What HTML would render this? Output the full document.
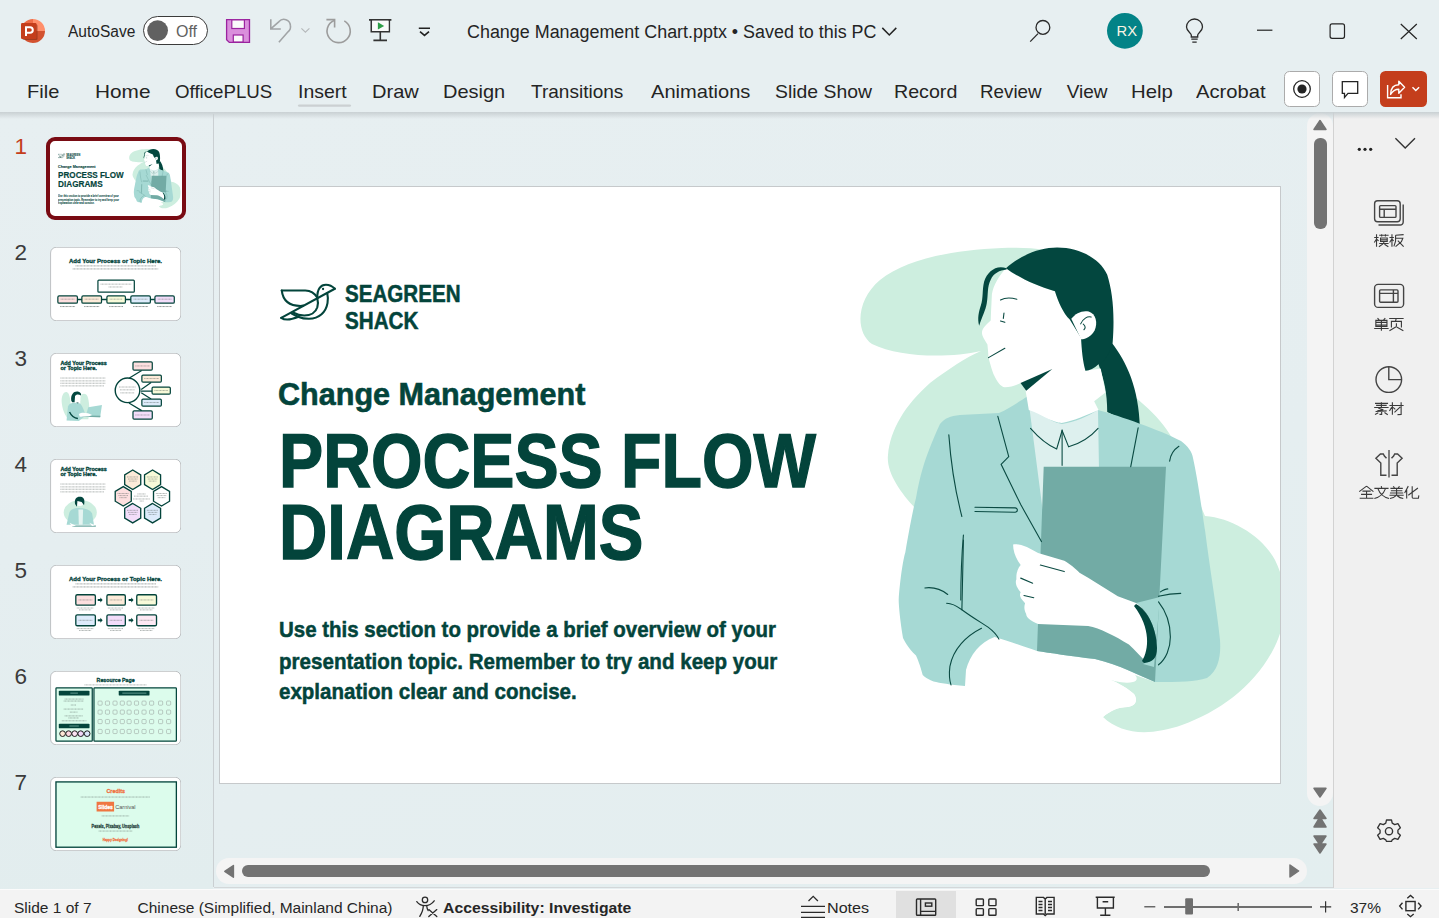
<!DOCTYPE html>
<html><head><meta charset="utf-8">
<style>
html,body{margin:0;padding:0;width:1439px;height:918px;overflow:hidden;background:#E7EFF1;font-family:"Liberation Sans",sans-serif;color:#242424;}
.a{position:absolute;}
.t{position:absolute;white-space:nowrap;line-height:1;}
.rib{font-size:19px;top:81.6px;color:#242424;transform-origin:0 0;}
.st{font-size:15.5px;top:899.5px;color:#262626;}
.sl{font-weight:700;color:#03443B;transform-origin:0 0;}
</style></head>
<body>
<!-- title bar -->
<div class="a" style="left:0;top:0;width:1439px;height:112px;background:#E7EFF1"></div>

<!-- left thumbnail panel -->
<div class="a" style="left:0;top:112px;width:213px;height:777px;background:linear-gradient(170deg,#E7EFF1 0%,#E5EEF0 55%,#E2EDEE 100%)"></div>
<div class="a" style="left:213px;top:114px;width:1px;height:773px;background:#CACFD2"></div>
<!--T1S--><div class="a" style="left:46px;top:137px;width:132px;height:75px;border:4px solid #790B13;border-radius:9px;background:#fff"></div><div class="a" style="left:50px;top:141px;width:132px;height:75px;overflow:hidden;border-radius:5px"><div class="a" style="left:0;top:0;width:1439px;height:918px;transform-origin:0 0;transform:matrix(0.1222,0,0,0.1222,-25.98,-22.2)">
<span class="t sl" style="left:345.3px;top:281.5px;font-size:23.8px;transform:scaleX(0.865);-webkit-text-stroke:0.5px #03443B">SEAGREEN</span>
<span class="t sl" style="left:345.3px;top:308.5px;font-size:23.8px;transform:scaleX(0.868);-webkit-text-stroke:0.5px #03443B">SHACK</span>
<span class="t sl" style="left:278.4px;top:377.6px;font-size:32px;transform:scaleX(0.955);-webkit-text-stroke:0.6px #03443B">Change Management</span>
<span class="t sl" style="left:279.3px;top:422px;font-size:76.8px;transform:scaleX(0.862);-webkit-text-stroke:1.4px #03443B">PROCESS FLOW</span>
<span class="t sl" style="left:279.3px;top:493.5px;font-size:77px;transform:scaleX(0.869);-webkit-text-stroke:1.4px #03443B">DIAGRAMS</span>
<span class="t sl" style="left:278.5px;top:619.3px;font-size:22px;transform:scaleX(0.93);-webkit-text-stroke:0.5px #03443B">Use this section to provide a brief overview of your</span>
<span class="t sl" style="left:278.5px;top:650.6px;font-size:22px;transform:scaleX(0.935);-webkit-text-stroke:0.5px #03443B">presentation topic. Remember to try and keep your</span>
<span class="t sl" style="left:279.4px;top:681.1px;font-size:22px;transform:scaleX(0.933);-webkit-text-stroke:0.5px #03443B">explanation clear and concise.</span>


<svg class="a" style="left:276px;top:278px" width="64" height="48" viewBox="0 0 1224 918">
 <g fill="none" stroke="#03443B" stroke-width="40" stroke-linecap="round" stroke-linejoin="round">
  <path d="M110 238 L560 238 C650 240 740 290 785 370"/>
  <path d="M110 238 C130 420 240 535 470 535 L520 528"/>
  <path d="M100 762 L1125 205"/>
  <path d="M790 380 C785 200 860 130 955 130 C1030 130 1080 160 1125 205"/>
  <path d="M790 390 C805 440 805 500 790 560 C760 660 660 718 540 718 C450 718 380 690 335 665"/>
  <path d="M980 290 C995 350 995 420 985 480 C955 650 830 780 630 780 C540 780 470 760 420 740"/>
  <path d="M100 762 C160 805 290 800 430 742"/>
  <path d="M300 680 L420 742"/>
 </g>
 <circle cx="900" cy="210" r="22" fill="#03443B"/>
</svg>



<svg class="a" style="left:220px;top:187px" width="1060" height="596" viewBox="220 187 1060 596">
 <!-- mint blob -->
 <path fill="#CDEEDF" d="M981 351 C950 358 900 358 872 344 C855 332 856 300 880 280 C905 260 950 250 1002 248 C1050 246 1095 255 1108 290 L1112 380 C1130 392 1160 415 1172 438 L1205 516 C1232 518 1262 536 1275 560 C1290 590 1287 625 1272 652 C1252 688 1218 712 1182 725 C1150 736 1122 735 1103 717 C1110 711 1118 707 1128 707 C1136 706 1138 700 1134 694 C1125 686 1114 681 1106 678 L1060 600 L915 508 C900 492 886 472 888 455 C890 430 905 405 930 383 C950 368 965 358 981 351 Z"/>
 <path fill="#FFFFFF" d="M950 690 L1000 630 L1100 640 L1160 672 L1155 682 L1135 675 C1138 678 1137 681 1133 682 C1125 684 1112 681 1106 678 C1114 681 1125 686 1134 694 C1138 700 1136 706 1128 707 C1118 707 1110 711 1103 717 L1000 760 L950 760 Z"/>
 <!-- ponytail lower -->
 <g transform="translate(970,240) scale(0.21782)">
  <path fill="#03473F" d="M650 470 C720 560 775 680 780 860 L630 790 C630 700 615 640 590 570 Z"/>
 </g>
 <!-- jacket -->
 <path fill="#A6D9D4" d="M940 424 C945 418 950 416 960 415 L999 413 C1010 408 1020 401 1028 396 L1098 410 C1120 416 1160 430 1181 441 C1188 446 1192 452 1193 458 C1198 480 1203 518 1205 530 C1210 570 1217 610 1220 640 C1221 655 1219 670 1207 678 C1195 682 1180 682 1155 682 C1140 676 1120 665 1095 659 C1070 656 1050 653 1037 651 C1020 645 1005 640 994.6 637 C980 642 970 655 966 670 L965 686 C950 685 940 683 933.6 681.6 C925 678 923 675 922.7 675 C920 665 918 660 916 655.5 C908 648 904 640 903 638 C900 620 898.7 605 898.7 600 C900 580 903 560 905.3 552.5 C910 525 914 505 916 498 C920 475 925 460 929 450 C933 440 937 430 940 424 Z"/>
 <!-- shirt -->
 <path fill="#DDF0EE" d="M1028 397 C1036 410 1048 422 1062 424 C1076 422 1088 416 1098 410 L1099 470 L1042.5 509 Z"/>
 <!-- face + neck -->
 <g transform="translate(970,240) scale(0.21782)">
  <path fill="#FFFFFF" d="M165 130 C120 180 100 230 100 260 C98 300 96 340 95 370 C75 390 55 405 55 425 C55 440 62 450 80 480 C82 500 84 520 85 540 C95 580 105 610 110 620 C125 650 140 675 160 676 C185 676 210 668 235 655 L255 690 L270 780 C300 790 330 805 360 822 C390 835 410 840 420 840 C450 835 500 820 590 780 L570 740 L622 700 L600 590 L530 600 L510 450 L458 365 C428 335 405 285 390 235 C300 210 220 170 165 130 Z"/>
  <path fill="#03473F" d="M165 130 C230 70 320 35 400 35 C510 35 600 90 630 160 C655 240 665 340 655 470 C650 500 620 560 590 570 C570 590 550 598 530 600 C518 560 512 500 510 450 L458 365 C428 335 405 285 390 235 C300 210 220 170 165 130 Z"/>
  <path fill="#FFFFFF" d="M465 362 C485 335 515 322 545 328 C578 338 588 380 572 415 C558 442 532 455 510 456 Z"/>
  <path fill="#03473F" d="M168 130 C120 112 80 145 65 190 C55 230 62 262 50 300 C40 330 33 360 42 394 C55 352 72 322 77 290 C84 250 78 215 95 182 C110 152 135 140 168 136 Z"/>
  <path fill="#03473F" d="M232 656 L378 592 L258 692 Z"/>
  <g fill="none" stroke="#0A4A42" stroke-width="5" stroke-linecap="round">
   <path d="M140 275 C160 265 190 265 215 272"/>
   <path d="M156 335 L153 360 M140 372 L160 378"/>
   <path d="M85 540 L160 497"/>
   <path d="M508 385 C518 362 540 348 556 354 M520 386 C532 396 530 406 523 412"/>
  </g>
 </g>
 <!-- folder -->
 <path fill="#72ABA5" d="M1043.7 466.7 L1166 466.7 L1155 682 C1140 676 1120 665 1095 659 C1070 656 1050 653 1037 651 Z"/>
 <!-- hand + forearm -->
 <path fill="#FFFFFF" d="M1013.1 544.4 C1020 543 1030 548 1038.1 553.1 L1064.3 560.7 C1070 564 1076 569 1079.5 572.7 L1088.1 577.8 L1117.8 596.3 L1138.1 603.7 C1150 615 1156 635 1154.8 644.4 C1153 655 1150 660 1147.4 663 C1140 656 1135 650 1128.9 644.4 C1115 636 1100 628 1088.1 625.9 L1038.1 623.9 C1030 621 1026 617 1026.2 614.1 C1024 610 1024 606 1025.1 603.2 C1020 598 1019 595 1020.7 592.3 C1016 587 1015 582 1016.4 579.2 C1016 573 1018 568 1020.7 565.1 C1016 559 1013 551 1013.1 544.4 Z"/>
 <path fill="#A6D9D4" d="M1136 603 L1160 597 L1154 667 L1143 664 C1152 660 1157 655 1157 648 C1157 630 1148 610 1136 603 Z"/>
 <path fill="#03473F" d="M1136 604 C1148 610 1157 630 1157 648 C1157 658 1153 662 1144 663 L1142 661 C1149 650 1151 628 1134 606 Z"/>
 <!-- lines -->
 <g fill="none" stroke="#0A4A42" stroke-width="1.1" stroke-linecap="round">
  <g transform="translate(890,400) scale(0.21786)" stroke-width="5">
   <path d="M645 130 C680 170 720 205 765 225 L790 140 L820 215 C870 200 920 170 955 130"/>
   <path d="M790 140 L790 300"/>
   <path d="M495 75 L545 260 L510 295 L600 480 L695 650"/>
   <path d="M390 492 L575 495 C588 497 588 514 575 515 L390 512"/>
   <path d="M270 160 C280 300 300 420 330 535"/>
   <path d="M337 620 C330 700 325 800 325 918"/>
  </g>
  <g transform="translate(890,540) scale(0.21786)" stroke-width="5">
   <path d="M160 220 C200 215 240 230 265 250"/>
   <path d="M260 290 C290 290 310 305 330 320 C370 350 420 380 450 400 C470 415 490 435 500 455"/>
   <path d="M420 405 C350 440 290 500 275 580 C270 620 275 650 280 665"/>
   <path d="M337 0 L330 320"/>
   <path d="M690 115 L800 145 M600 175 L655 198 M615 255 L660 265"/>
  </g>
  <g transform="translate(1040,400) scale(0.37037)" stroke-width="3">
   <path d="M265 75 L245 180"/>
   <path d="M375 125 C360 135 352 150 350 165"/>
   <path d="M320 530 C340 525 360 522 380 522 M325 518 C335 512 340 510 345 510"/>
   <path d="M320 545 C340 570 352 600 352 640 C352 670 340 700 320 715"/>
  </g>
 </g>
</svg>

</div></div><!--T1E-->
<!--THS--><svg class="a" style="left:50.1px;top:247.4px" width="131.4" height="74" viewBox="28 25 1384 783"><rect x="31" y="28" width="1378" height="777" rx="60" fill="#fff" stroke="#AEB1B3" stroke-width="8"/><text x="225" y="190" font-family="Liberation Sans" font-weight="700" font-size="58" fill="#03443B" stroke="#03443B" stroke-width="3" textLength="985" lengthAdjust="spacingAndGlyphs">Add Your Process or Topic Here.</text><path d="M295 225 H1145" stroke="#4E5956" stroke-width="6" stroke-dasharray="10 5"/><path d="M265 257 H1170" stroke="#4E5956" stroke-width="6" stroke-dasharray="10 5"/><rect x="532" y="375" width="385" height="127" rx="10" fill="#fff" stroke="#03443B" stroke-width="13"/><path d="M560 418 H885" stroke="#4E5956" stroke-width="5" stroke-dasharray="10 5"/><path d="M645 448 H790" stroke="#4E5956" stroke-width="5" stroke-dasharray="10 5"/><path d="M315 580 H1135" stroke="#03443B" stroke-width="15"/><rect x="108" y="543" width="207" height="77" rx="14" fill="#FDDFDF" stroke="#03443B" stroke-width="13"/><path d="M138 577 H285" stroke="#4E5956" stroke-width="5" stroke-dasharray="10 5"/><path d="M133 655 H290" stroke="#4E5956" stroke-width="7" stroke-dasharray="10 5"/><rect x="362" y="543" width="208" height="77" rx="14" fill="#FDEBD9" stroke="#03443B" stroke-width="13"/><path d="M392 577 H540" stroke="#4E5956" stroke-width="5" stroke-dasharray="10 5"/><path d="M387 655 H545" stroke="#4E5956" stroke-width="7" stroke-dasharray="10 5"/><rect x="627" y="543" width="196" height="77" rx="14" fill="#F8FAD9" stroke="#03443B" stroke-width="13"/><path d="M657 577 H793" stroke="#4E5956" stroke-width="5" stroke-dasharray="10 5"/><path d="M652 655 H798" stroke="#4E5956" stroke-width="7" stroke-dasharray="10 5"/><rect x="880" y="543" width="207" height="77" rx="14" fill="#DDEBFB" stroke="#03443B" stroke-width="13"/><path d="M910 577 H1057" stroke="#4E5956" stroke-width="5" stroke-dasharray="10 5"/><path d="M905 655 H1062" stroke="#4E5956" stroke-width="7" stroke-dasharray="10 5"/><rect x="1135" y="543" width="205" height="77" rx="14" fill="#F3DDFA" stroke="#03443B" stroke-width="13"/><path d="M1165 577 H1310" stroke="#4E5956" stroke-width="5" stroke-dasharray="10 5"/><path d="M1160 655 H1315" stroke="#4E5956" stroke-width="7" stroke-dasharray="10 5"/></svg>
<svg class="a" style="left:50.1px;top:353.4px" width="131.4" height="74" viewBox="28 25 1384 783"><rect x="31" y="28" width="1378" height="777" rx="60" fill="#fff" stroke="#AEB1B3" stroke-width="8"/><text x="135" y="156" font-family="Liberation Sans" font-weight="700" font-size="50" fill="#03443B" stroke="#03443B" stroke-width="3" textLength="490" lengthAdjust="spacingAndGlyphs">Add Your Process</text><text x="135" y="210" font-family="Liberation Sans" font-weight="700" font-size="50" fill="#03443B" stroke="#03443B" stroke-width="3" textLength="385" lengthAdjust="spacingAndGlyphs">or Topic Here.</text><path d="M135 290 H610" stroke="#4E5956" stroke-width="5" stroke-dasharray="10 5"/><path d="M135 320 H610" stroke="#4E5956" stroke-width="5" stroke-dasharray="10 5"/><path d="M135 345 H610" stroke="#4E5956" stroke-width="5" stroke-dasharray="10 5"/><path d="M135 373 H595" stroke="#4E5956" stroke-width="5" stroke-dasharray="10 5"/><path d="M150 560 C140 480 170 430 205 440 C240 450 250 560 245 740 C200 720 160 650 150 560 Z" fill="#CDEEDF"/><path d="M345 500 C350 450 400 440 420 480 C440 530 450 640 430 726 L345 726 Z" fill="#CDEEDF"/><path d="M200 740 L215 590 C225 560 260 550 290 552 L345 560 C370 590 390 640 400 690 L330 745 Z" fill="#A6D9D4"/><path d="M272 470 C290 450 330 450 345 470 L345 530 C330 545 300 548 280 540 Z" fill="#fff"/><path d="M250 530 C240 460 280 425 320 432 C350 437 360 460 352 475 C330 458 300 460 290 480 L285 545 L260 545 Z" fill="#03473F"/><path d="M300 545 L330 552 L320 560 Z" fill="#03473F"/><path d="M232 650 C250 690 280 715 320 718" fill="none" stroke="#03473F" stroke-width="14"/><path d="M400 700 L430 600 L575 575 L555 705 Z" fill="#A6D9D4"/><path d="M360 700 L555 705 L560 690 L380 685 Z" fill="#72ABA5"/><path d="M330 670 C360 650 420 655 470 680 L440 695 L340 700 Z" fill="#fff"/><circle cx="845" cy="420" r="130" fill="#fff" stroke="#03443B" stroke-width="15"/><path d="M865 290 L995 210 M990 410 L1095 338 M985 428 H1105 M990 445 L1095 512 M860 555 L995 635" stroke="#03443B" stroke-width="13"/><rect x="903" y="118" width="204" height="89" rx="12" fill="#FDDFDF" stroke="#03443B" stroke-width="13"/><path d="M928 162 H1082" stroke="#4E5956" stroke-width="5" stroke-dasharray="10 5"/><rect x="997" y="258" width="206" height="75" rx="12" fill="#FDEBD9" stroke="#03443B" stroke-width="13"/><path d="M1022 295 H1178" stroke="#4E5956" stroke-width="5" stroke-dasharray="10 5"/><rect x="1105" y="385" width="193" height="75" rx="12" fill="#F8FAD9" stroke="#03443B" stroke-width="13"/><path d="M1130 422 H1273" stroke="#4E5956" stroke-width="5" stroke-dasharray="10 5"/><rect x="997" y="512" width="206" height="75" rx="12" fill="#DDEBFB" stroke="#03443B" stroke-width="13"/><path d="M1022 549 H1178" stroke="#4E5956" stroke-width="5" stroke-dasharray="10 5"/><rect x="903" y="638" width="204" height="87" rx="12" fill="#F3DDFA" stroke="#03443B" stroke-width="13"/><path d="M928 681 H1082" stroke="#4E5956" stroke-width="5" stroke-dasharray="10 5"/><path d="M755 385 H935" stroke="#4E5956" stroke-width="5" stroke-dasharray="10 5"/><path d="M765 415 H920" stroke="#4E5956" stroke-width="5" stroke-dasharray="10 5"/><path d="M770 447 H915" stroke="#4E5956" stroke-width="5" stroke-dasharray="10 5"/></svg>
<svg class="a" style="left:50.1px;top:459.4px" width="131.4" height="74" viewBox="28 25 1384 783"><rect x="31" y="28" width="1378" height="777" rx="60" fill="#fff" stroke="#AEB1B3" stroke-width="8"/><text x="135" y="156" font-family="Liberation Sans" font-weight="700" font-size="50" fill="#03443B" stroke="#03443B" stroke-width="3" textLength="490" lengthAdjust="spacingAndGlyphs">Add Your Process</text><text x="135" y="210" font-family="Liberation Sans" font-weight="700" font-size="50" fill="#03443B" stroke="#03443B" stroke-width="3" textLength="385" lengthAdjust="spacingAndGlyphs">or Topic Here.</text><path d="M135 290 H610" stroke="#4E5956" stroke-width="5" stroke-dasharray="10 5"/><path d="M135 320 H610" stroke="#4E5956" stroke-width="5" stroke-dasharray="10 5"/><path d="M135 345 H610" stroke="#4E5956" stroke-width="5" stroke-dasharray="10 5"/><path d="M135 373 H595" stroke="#4E5956" stroke-width="5" stroke-dasharray="10 5"/><ellipse cx="345" cy="590" rx="175" ry="130" fill="#CDEEDF"/><path d="M200 720 L230 590 C250 550 300 540 345 545 C400 545 450 560 470 600 L490 720 Z" fill="#A6D9D4"/><path d="M325 560 L375 560 L370 720 L330 720 Z" fill="#E5F4F1"/><circle cx="340" cy="480" r="42" fill="#fff"/><path d="M290 500 C280 440 310 420 350 425 C390 430 395 470 385 515 L360 480 L315 470 L310 530 Z" fill="#03473F"/><path d="M260 735 H510" stroke="#72ABA5" stroke-width="14"/><path d="M230 700 L300 730 L260 740 Z M440 700 L500 725 L470 735 Z" fill="#fff"/><polygon points="900.0,142.0 815.1,193.5 815.1,296.5 900.0,348.0 984.9,296.5 984.9,193.5" fill="#FDEBD9" stroke="#03443B" stroke-width="14"/><path d="M840 215 H960" stroke="#4E5956" stroke-width="5" stroke-dasharray="10 5"/><path d="M850 237 H950" stroke="#4E5956" stroke-width="5" stroke-dasharray="10 5"/><path d="M860 259 H940" stroke="#4E5956" stroke-width="5" stroke-dasharray="10 5"/><polygon points="1110.0,142.0 1025.1,193.5 1025.1,296.5 1110.0,348.0 1194.9,296.5 1194.9,193.5" fill="#F8FAD9" stroke="#03443B" stroke-width="14"/><path d="M1050 215 H1170" stroke="#4E5956" stroke-width="5" stroke-dasharray="10 5"/><path d="M1060 237 H1160" stroke="#4E5956" stroke-width="5" stroke-dasharray="10 5"/><path d="M1070 259 H1150" stroke="#4E5956" stroke-width="5" stroke-dasharray="10 5"/><polygon points="800.0,317.0 715.1,368.5 715.1,471.5 800.0,523.0 884.9,471.5 884.9,368.5" fill="#FDDFDF" stroke="#03443B" stroke-width="14"/><path d="M740 390 H860" stroke="#4E5956" stroke-width="5" stroke-dasharray="10 5"/><path d="M750 412 H850" stroke="#4E5956" stroke-width="5" stroke-dasharray="10 5"/><path d="M760 434 H840" stroke="#4E5956" stroke-width="5" stroke-dasharray="10 5"/><polygon points="1205.0,317.0 1120.1,368.5 1120.1,471.5 1205.0,523.0 1289.9,471.5 1289.9,368.5" fill="#fff" stroke="#03443B" stroke-width="14"/><path d="M1145 390 H1265" stroke="#4E5956" stroke-width="5" stroke-dasharray="10 5"/><path d="M1155 412 H1255" stroke="#4E5956" stroke-width="5" stroke-dasharray="10 5"/><path d="M1165 434 H1245" stroke="#4E5956" stroke-width="5" stroke-dasharray="10 5"/><polygon points="900.0,495.0 815.1,546.5 815.1,649.5 900.0,701.0 984.9,649.5 984.9,546.5" fill="#F3DDFA" stroke="#03443B" stroke-width="14"/><path d="M840 568 H960" stroke="#4E5956" stroke-width="5" stroke-dasharray="10 5"/><path d="M850 590 H950" stroke="#4E5956" stroke-width="5" stroke-dasharray="10 5"/><path d="M860 612 H940" stroke="#4E5956" stroke-width="5" stroke-dasharray="10 5"/><polygon points="1110.0,495.0 1025.1,546.5 1025.1,649.5 1110.0,701.0 1194.9,649.5 1194.9,546.5" fill="#DDEBFB" stroke="#03443B" stroke-width="14"/><path d="M1050 568 H1170" stroke="#4E5956" stroke-width="5" stroke-dasharray="10 5"/><path d="M1060 590 H1160" stroke="#4E5956" stroke-width="5" stroke-dasharray="10 5"/><path d="M1070 612 H1150" stroke="#4E5956" stroke-width="5" stroke-dasharray="10 5"/><path d="M950 395 H1040" stroke="#4E5956" stroke-width="5" stroke-dasharray="10 5"/><path d="M915 418 H1065" stroke="#4E5956" stroke-width="5" stroke-dasharray="10 5"/><path d="M905 448 H1080" stroke="#4E5956" stroke-width="5" stroke-dasharray="10 5"/><path d="M975 470 H1015" stroke="#4E5956" stroke-width="5" stroke-dasharray="10 5"/></svg>
<svg class="a" style="left:50.1px;top:565.4px" width="131.4" height="74" viewBox="28 25 1384 783"><rect x="31" y="28" width="1378" height="777" rx="60" fill="#fff" stroke="#AEB1B3" stroke-width="8"/><text x="225" y="190" font-family="Liberation Sans" font-weight="700" font-size="58" fill="#03443B" stroke="#03443B" stroke-width="3" textLength="985" lengthAdjust="spacingAndGlyphs">Add Your Process or Topic Here.</text><path d="M295 225 H1145" stroke="#4E5956" stroke-width="6" stroke-dasharray="10 5"/><path d="M265 257 H1170" stroke="#4E5956" stroke-width="6" stroke-dasharray="10 5"/><rect x="298" y="340" width="207" height="110" rx="16" fill="#FDDFDF" stroke="#03443B" stroke-width="14"/><path d="M328 395 H475" stroke="#4E5956" stroke-width="5" stroke-dasharray="10 5"/><path d="M308 480 H485" stroke="#4E5956" stroke-width="5" stroke-dasharray="10 5"/><path d="M333 500 H460" stroke="#4E5956" stroke-width="5" stroke-dasharray="10 5"/><rect x="627" y="340" width="195" height="110" rx="16" fill="#FDEBD9" stroke="#03443B" stroke-width="14"/><path d="M657 395 H792" stroke="#4E5956" stroke-width="5" stroke-dasharray="10 5"/><path d="M637 480 H802" stroke="#4E5956" stroke-width="5" stroke-dasharray="10 5"/><path d="M662 500 H777" stroke="#4E5956" stroke-width="5" stroke-dasharray="10 5"/><rect x="943" y="340" width="209" height="110" rx="16" fill="#F8FAD9" stroke="#03443B" stroke-width="14"/><path d="M973 395 H1122" stroke="#4E5956" stroke-width="5" stroke-dasharray="10 5"/><path d="M953 480 H1132" stroke="#4E5956" stroke-width="5" stroke-dasharray="10 5"/><path d="M978 500 H1107" stroke="#4E5956" stroke-width="5" stroke-dasharray="10 5"/><path d="M530 384 H558 V369 L582 395 L558 421 V406 H530 Z" fill="#03443B"/><path d="M857 384 H885 V369 L909 395 L885 421 V406 H857 Z" fill="#03443B"/><rect x="298" y="552" width="207" height="116" rx="16" fill="#DDEBFB" stroke="#03443B" stroke-width="14"/><path d="M328 610 H475" stroke="#4E5956" stroke-width="5" stroke-dasharray="10 5"/><path d="M308 698 H485" stroke="#4E5956" stroke-width="5" stroke-dasharray="10 5"/><path d="M333 718 H460" stroke="#4E5956" stroke-width="5" stroke-dasharray="10 5"/><rect x="627" y="552" width="195" height="116" rx="16" fill="#F3DDFA" stroke="#03443B" stroke-width="14"/><path d="M657 610 H792" stroke="#4E5956" stroke-width="5" stroke-dasharray="10 5"/><path d="M637 698 H802" stroke="#4E5956" stroke-width="5" stroke-dasharray="10 5"/><path d="M662 718 H777" stroke="#4E5956" stroke-width="5" stroke-dasharray="10 5"/><rect x="943" y="552" width="209" height="116" rx="16" fill="#FDE9F4" stroke="#03443B" stroke-width="14"/><path d="M973 610 H1122" stroke="#4E5956" stroke-width="5" stroke-dasharray="10 5"/><path d="M953 698 H1132" stroke="#4E5956" stroke-width="5" stroke-dasharray="10 5"/><path d="M978 718 H1107" stroke="#4E5956" stroke-width="5" stroke-dasharray="10 5"/><path d="M530 599 H558 V584 L582 610 L558 636 V621 H530 Z" fill="#03443B"/><path d="M857 599 H885 V584 L909 610 L885 636 V621 H857 Z" fill="#03443B"/></svg>
<svg class="a" style="left:50.1px;top:671.4px" width="131.4" height="74" viewBox="28 25 1384 783"><rect x="31" y="28" width="1378" height="777" rx="60" fill="#fff" stroke="#AEB1B3" stroke-width="8"/><text x="518" y="138" font-family="Liberation Sans" font-weight="700" font-size="56" fill="#03443B" stroke="#03443B" stroke-width="3" textLength="402" lengthAdjust="spacingAndGlyphs">Resource Page</text><path d="M390 172 H1045" stroke="#4E5956" stroke-width="5" stroke-dasharray="10 5"/><rect x="88" y="203" width="384" height="565" rx="8" fill="#DCFCEC" stroke="#03443B" stroke-width="13"/><rect x="490" y="203" width="872" height="565" rx="8" fill="#DCFCEC" stroke="#03443B" stroke-width="13"/><rect x="118" y="233" width="325" height="52" rx="10" fill="#03443B"/><rect x="118" y="582" width="325" height="50" rx="10" fill="#03443B"/><rect x="752" y="233" width="326" height="52" rx="10" fill="#03443B"/><path d="M240 259 H320" stroke="#cfe" stroke-width="5"/><path d="M230 607 H330" stroke="#cfe" stroke-width="5"/><path d="M790 259 H1045" stroke="#cfe" stroke-width="5"/><path d="M180 322 H380" stroke="#4E5956" stroke-width="5" stroke-dasharray="10 5"/><path d="M170 343 H382" stroke="#4E5956" stroke-width="5" stroke-dasharray="10 5"/><path d="M245 385 H305" stroke="#4E5956" stroke-width="5" stroke-dasharray="10 5"/><path d="M170 428 H380" stroke="#4E5956" stroke-width="5" stroke-dasharray="10 5"/><path d="M235 460 H315" stroke="#4E5956" stroke-width="5" stroke-dasharray="10 5"/><path d="M180 500 H375" stroke="#4E5956" stroke-width="5" stroke-dasharray="10 5"/><path d="M220 522 H330" stroke="#4E5956" stroke-width="5" stroke-dasharray="10 5"/><path d="M150 552 H410" stroke="#4E5956" stroke-width="5" stroke-dasharray="10 5"/><circle cx="158" cy="688" r="30" fill="#FDE7D6" stroke="#111" stroke-width="10"/><circle cx="222" cy="688" r="30" fill="#FBD7DF" stroke="#111" stroke-width="10"/><circle cx="286" cy="688" r="30" fill="#FBE3F2" stroke="#111" stroke-width="10"/><circle cx="350" cy="688" r="30" fill="#F1D9F7" stroke="#111" stroke-width="10"/><circle cx="418" cy="688" r="30" fill="#DCE8FA" stroke="#111" stroke-width="10"/><rect x="533" y="343" width="44" height="44" rx="10" fill="none" stroke="#9AA3A0" stroke-width="6"/><rect x="611" y="343" width="44" height="44" rx="10" fill="none" stroke="#9AA3A0" stroke-width="6"/><rect x="691" y="343" width="44" height="44" rx="10" fill="none" stroke="#9AA3A0" stroke-width="6"/><rect x="768" y="343" width="44" height="44" rx="10" fill="none" stroke="#9AA3A0" stroke-width="6"/><rect x="840" y="343" width="44" height="44" rx="10" fill="none" stroke="#9AA3A0" stroke-width="6"/><rect x="918" y="343" width="44" height="44" rx="10" fill="none" stroke="#9AA3A0" stroke-width="6"/><rect x="998" y="343" width="44" height="44" rx="10" fill="none" stroke="#9AA3A0" stroke-width="6"/><rect x="1078" y="343" width="44" height="44" rx="10" fill="none" stroke="#9AA3A0" stroke-width="6"/><rect x="1173" y="343" width="44" height="44" rx="10" fill="none" stroke="#9AA3A0" stroke-width="6"/><rect x="1258" y="343" width="44" height="44" rx="10" fill="none" stroke="#9AA3A0" stroke-width="6"/><rect x="533" y="438" width="44" height="44" rx="10" fill="none" stroke="#9AA3A0" stroke-width="6"/><rect x="611" y="438" width="44" height="44" rx="10" fill="none" stroke="#9AA3A0" stroke-width="6"/><rect x="691" y="438" width="44" height="44" rx="10" fill="none" stroke="#9AA3A0" stroke-width="6"/><rect x="768" y="438" width="44" height="44" rx="10" fill="none" stroke="#9AA3A0" stroke-width="6"/><rect x="840" y="438" width="44" height="44" rx="10" fill="none" stroke="#9AA3A0" stroke-width="6"/><rect x="918" y="438" width="44" height="44" rx="10" fill="none" stroke="#9AA3A0" stroke-width="6"/><rect x="998" y="438" width="44" height="44" rx="10" fill="none" stroke="#9AA3A0" stroke-width="6"/><rect x="1078" y="438" width="44" height="44" rx="10" fill="none" stroke="#9AA3A0" stroke-width="6"/><rect x="1173" y="438" width="44" height="44" rx="10" fill="none" stroke="#9AA3A0" stroke-width="6"/><rect x="1258" y="438" width="44" height="44" rx="10" fill="none" stroke="#9AA3A0" stroke-width="6"/><rect x="533" y="538" width="44" height="44" rx="10" fill="none" stroke="#9AA3A0" stroke-width="6"/><rect x="611" y="538" width="44" height="44" rx="10" fill="none" stroke="#9AA3A0" stroke-width="6"/><rect x="691" y="538" width="44" height="44" rx="10" fill="none" stroke="#9AA3A0" stroke-width="6"/><rect x="768" y="538" width="44" height="44" rx="10" fill="none" stroke="#9AA3A0" stroke-width="6"/><rect x="840" y="538" width="44" height="44" rx="10" fill="none" stroke="#9AA3A0" stroke-width="6"/><rect x="918" y="538" width="44" height="44" rx="10" fill="none" stroke="#9AA3A0" stroke-width="6"/><rect x="998" y="538" width="44" height="44" rx="10" fill="none" stroke="#9AA3A0" stroke-width="6"/><rect x="1078" y="538" width="44" height="44" rx="10" fill="none" stroke="#9AA3A0" stroke-width="6"/><rect x="1173" y="538" width="44" height="44" rx="10" fill="none" stroke="#9AA3A0" stroke-width="6"/><rect x="1258" y="538" width="44" height="44" rx="10" fill="none" stroke="#9AA3A0" stroke-width="6"/><rect x="533" y="643" width="44" height="44" rx="10" fill="none" stroke="#9AA3A0" stroke-width="6"/><rect x="611" y="643" width="44" height="44" rx="10" fill="none" stroke="#9AA3A0" stroke-width="6"/><rect x="691" y="643" width="44" height="44" rx="10" fill="none" stroke="#9AA3A0" stroke-width="6"/><rect x="768" y="643" width="44" height="44" rx="10" fill="none" stroke="#9AA3A0" stroke-width="6"/><rect x="840" y="643" width="44" height="44" rx="10" fill="none" stroke="#9AA3A0" stroke-width="6"/><rect x="918" y="643" width="44" height="44" rx="10" fill="none" stroke="#9AA3A0" stroke-width="6"/><rect x="998" y="643" width="44" height="44" rx="10" fill="none" stroke="#9AA3A0" stroke-width="6"/><rect x="1078" y="643" width="44" height="44" rx="10" fill="none" stroke="#9AA3A0" stroke-width="6"/><rect x="1173" y="643" width="44" height="44" rx="10" fill="none" stroke="#9AA3A0" stroke-width="6"/><rect x="1258" y="643" width="44" height="44" rx="10" fill="none" stroke="#9AA3A0" stroke-width="6"/></svg>
<svg class="a" style="left:50.1px;top:777.4px" width="131.4" height="74" viewBox="28 25 1384 783"><rect x="31" y="28" width="1378" height="777" rx="60" fill="#fff" stroke="#AEB1B3" stroke-width="8"/><rect x="88" y="77" width="1274" height="691" fill="#DCFCEC" stroke="#03443B" stroke-width="14"/><text x="622" y="190" font-family="Liberation Sans" font-weight="700" font-size="56" fill="#F0703F" stroke="#F0703F" stroke-width="3" textLength="196" lengthAdjust="spacingAndGlyphs">Credits</text><path d="M350 237 H1085" stroke="#4E5956" stroke-width="5" stroke-dasharray="10 5"/><rect x="518" y="287" width="185" height="103" fill="#EF7641"/><text x="535" y="362" font-family="Liberation Sans" font-weight="700" font-size="58" fill="#fff" stroke="#fff" stroke-width="3" textLength="155" lengthAdjust="spacingAndGlyphs">Slides</text><text x="715" y="362" font-family="Liberation Sans" font-size="62" fill="#555" textLength="215" lengthAdjust="spacingAndGlyphs">Carnival</text><path d="M572 437 H862" stroke="#4E5956" stroke-width="5" stroke-dasharray="10 5"/><text x="465" y="562" font-family="Liberation Sans" font-weight="700" font-size="48" fill="#2F4A45" stroke="#2F4A45" stroke-width="3" textLength="505" lengthAdjust="spacingAndGlyphs">Pexels, Pixabay, Unsplash</text><path d="M540 597 H900" stroke="#4E5956" stroke-width="5" stroke-dasharray="10 5"/><text x="583" y="700" font-family="Liberation Sans" font-weight="700" font-size="44" fill="#F0703F" stroke="#F0703F" stroke-width="3" textLength="267" lengthAdjust="spacingAndGlyphs">Happy Designing!</text></svg>
<span class="t" style="left:14.6px;top:136.1px;font-size:22.5px;color:#C43E1C">1</span>
<span class="t" style="left:14.6px;top:242.1px;font-size:22.5px;color:#3B3B3B">2</span>
<span class="t" style="left:14.6px;top:348.1px;font-size:22.5px;color:#3B3B3B">3</span>
<span class="t" style="left:14.6px;top:454.1px;font-size:22.5px;color:#3B3B3B">4</span>
<span class="t" style="left:14.6px;top:560.1px;font-size:22.5px;color:#3B3B3B">5</span>
<span class="t" style="left:14.6px;top:666.1px;font-size:22.5px;color:#3B3B3B">6</span>
<span class="t" style="left:14.6px;top:772.1px;font-size:22.5px;color:#3B3B3B">7</span>
<!--THE-->


<!-- main area -->
<div class="a" style="left:214px;top:113px;width:1119px;height:774px;background:linear-gradient(160deg,#E7EFF1 0%,#E5EEF0 60%,#E3EEEF 100%)"></div>
<div class="a" style="left:214px;top:887px;width:1120px;height:1px;background:#D3D7D9"></div>

<!-- slide -->
<div class="a" style="left:219px;top:186px;width:1060px;height:596px;background:#fff;border:1px solid #C6C9CB"></div>

<!-- vertical scrollbar -->
<div class="a" style="left:1307px;top:113px;width:26px;height:693px;background:#F4F4F4;border-radius:13px"></div>
<div class="a" style="left:1314px;top:138px;width:12.5px;height:91px;background:#737373;border-radius:6px"></div>

<!-- right pane -->
<div class="a" style="left:1333px;top:112px;width:1px;height:776px;background:#D2D2D2"></div>
<div class="a" style="left:1334px;top:112px;width:105px;height:776px;background:#F0F0F0"></div>

<!-- horizontal scrollbar -->
<div class="a" style="left:216px;top:858px;width:1091px;height:26px;background:#F4F4F4;border-radius:13px"></div>
<div class="a" style="left:242px;top:865px;width:968px;height:12px;background:#737373;border-radius:6px"></div>


<!-- ribbon shadow -->
<div class="a" style="left:0;top:112px;width:1439px;height:7px;background:linear-gradient(#C9D0D3,rgba(230,236,239,0))"></div>


<!-- ===== SLIDE TEXT ===== -->
<span class="t sl" style="left:345.3px;top:281.5px;font-size:23.8px;transform:scaleX(0.865);-webkit-text-stroke:0.5px #03443B">SEAGREEN</span>
<span class="t sl" style="left:345.3px;top:308.5px;font-size:23.8px;transform:scaleX(0.868);-webkit-text-stroke:0.5px #03443B">SHACK</span>
<span class="t sl" style="left:278.4px;top:377.6px;font-size:32px;transform:scaleX(0.955);-webkit-text-stroke:0.6px #03443B">Change Management</span>
<span class="t sl" style="left:279.3px;top:422px;font-size:76.8px;transform:scaleX(0.862);-webkit-text-stroke:1.4px #03443B">PROCESS FLOW</span>
<span class="t sl" style="left:279.3px;top:493.5px;font-size:77px;transform:scaleX(0.869);-webkit-text-stroke:1.4px #03443B">DIAGRAMS</span>
<span class="t sl" style="left:278.5px;top:619.3px;font-size:22px;transform:scaleX(0.93);-webkit-text-stroke:0.5px #03443B">Use this section to provide a brief overview of your</span>
<span class="t sl" style="left:278.5px;top:650.6px;font-size:22px;transform:scaleX(0.935);-webkit-text-stroke:0.5px #03443B">presentation topic. Remember to try and keep your</span>
<span class="t sl" style="left:279.4px;top:681.1px;font-size:22px;transform:scaleX(0.933);-webkit-text-stroke:0.5px #03443B">explanation clear and concise.</span>


<svg class="a" style="left:276px;top:278px" width="64" height="48" viewBox="0 0 1224 918">
 <g fill="none" stroke="#03443B" stroke-width="40" stroke-linecap="round" stroke-linejoin="round">
  <path d="M110 238 L560 238 C650 240 740 290 785 370"/>
  <path d="M110 238 C130 420 240 535 470 535 L520 528"/>
  <path d="M100 762 L1125 205"/>
  <path d="M790 380 C785 200 860 130 955 130 C1030 130 1080 160 1125 205"/>
  <path d="M790 390 C805 440 805 500 790 560 C760 660 660 718 540 718 C450 718 380 690 335 665"/>
  <path d="M980 290 C995 350 995 420 985 480 C955 650 830 780 630 780 C540 780 470 760 420 740"/>
  <path d="M100 762 C160 805 290 800 430 742"/>
  <path d="M300 680 L420 742"/>
 </g>
 <circle cx="900" cy="210" r="22" fill="#03443B"/>
</svg>


<!-- ===== ILLUSTRATION ===== -->
<svg class="a" style="left:220px;top:187px" width="1060" height="596" viewBox="220 187 1060 596">
 <!-- mint blob -->
 <path fill="#CDEEDF" d="M981 351 C950 358 900 358 872 344 C855 332 856 300 880 280 C905 260 950 250 1002 248 C1050 246 1095 255 1108 290 L1112 380 C1130 392 1160 415 1172 438 L1205 516 C1232 518 1262 536 1275 560 C1290 590 1287 625 1272 652 C1252 688 1218 712 1182 725 C1150 736 1122 735 1103 717 C1110 711 1118 707 1128 707 C1136 706 1138 700 1134 694 C1125 686 1114 681 1106 678 L1060 600 L915 508 C900 492 886 472 888 455 C890 430 905 405 930 383 C950 368 965 358 981 351 Z"/>
 <path fill="#FFFFFF" d="M950 690 L1000 630 L1100 640 L1160 672 L1155 682 L1135 675 C1138 678 1137 681 1133 682 C1125 684 1112 681 1106 678 C1114 681 1125 686 1134 694 C1138 700 1136 706 1128 707 C1118 707 1110 711 1103 717 L1000 760 L950 760 Z"/>
 <!-- ponytail lower -->
 <g transform="translate(970,240) scale(0.21782)">
  <path fill="#03473F" d="M650 470 C720 560 775 680 780 860 L630 790 C630 700 615 640 590 570 Z"/>
 </g>
 <!-- jacket -->
 <path fill="#A6D9D4" d="M940 424 C945 418 950 416 960 415 L999 413 C1010 408 1020 401 1028 396 L1098 410 C1120 416 1160 430 1181 441 C1188 446 1192 452 1193 458 C1198 480 1203 518 1205 530 C1210 570 1217 610 1220 640 C1221 655 1219 670 1207 678 C1195 682 1180 682 1155 682 C1140 676 1120 665 1095 659 C1070 656 1050 653 1037 651 C1020 645 1005 640 994.6 637 C980 642 970 655 966 670 L965 686 C950 685 940 683 933.6 681.6 C925 678 923 675 922.7 675 C920 665 918 660 916 655.5 C908 648 904 640 903 638 C900 620 898.7 605 898.7 600 C900 580 903 560 905.3 552.5 C910 525 914 505 916 498 C920 475 925 460 929 450 C933 440 937 430 940 424 Z"/>
 <!-- shirt -->
 <path fill="#DDF0EE" d="M1028 397 C1036 410 1048 422 1062 424 C1076 422 1088 416 1098 410 L1099 470 L1042.5 509 Z"/>
 <!-- face + neck -->
 <g transform="translate(970,240) scale(0.21782)">
  <path fill="#FFFFFF" d="M165 130 C120 180 100 230 100 260 C98 300 96 340 95 370 C75 390 55 405 55 425 C55 440 62 450 80 480 C82 500 84 520 85 540 C95 580 105 610 110 620 C125 650 140 675 160 676 C185 676 210 668 235 655 L255 690 L270 780 C300 790 330 805 360 822 C390 835 410 840 420 840 C450 835 500 820 590 780 L570 740 L622 700 L600 590 L530 600 L510 450 L458 365 C428 335 405 285 390 235 C300 210 220 170 165 130 Z"/>
  <path fill="#03473F" d="M165 130 C230 70 320 35 400 35 C510 35 600 90 630 160 C655 240 665 340 655 470 C650 500 620 560 590 570 C570 590 550 598 530 600 C518 560 512 500 510 450 L458 365 C428 335 405 285 390 235 C300 210 220 170 165 130 Z"/>
  <path fill="#FFFFFF" d="M465 362 C485 335 515 322 545 328 C578 338 588 380 572 415 C558 442 532 455 510 456 Z"/>
  <path fill="#03473F" d="M168 130 C120 112 80 145 65 190 C55 230 62 262 50 300 C40 330 33 360 42 394 C55 352 72 322 77 290 C84 250 78 215 95 182 C110 152 135 140 168 136 Z"/>
  <path fill="#03473F" d="M232 656 L378 592 L258 692 Z"/>
  <g fill="none" stroke="#0A4A42" stroke-width="5" stroke-linecap="round">
   <path d="M140 275 C160 265 190 265 215 272"/>
   <path d="M156 335 L153 360 M140 372 L160 378"/>
   <path d="M85 540 L160 497"/>
   <path d="M508 385 C518 362 540 348 556 354 M520 386 C532 396 530 406 523 412"/>
  </g>
 </g>
 <!-- folder -->
 <path fill="#72ABA5" d="M1043.7 466.7 L1166 466.7 L1155 682 C1140 676 1120 665 1095 659 C1070 656 1050 653 1037 651 Z"/>
 <!-- hand + forearm -->
 <path fill="#FFFFFF" d="M1013.1 544.4 C1020 543 1030 548 1038.1 553.1 L1064.3 560.7 C1070 564 1076 569 1079.5 572.7 L1088.1 577.8 L1117.8 596.3 L1138.1 603.7 C1150 615 1156 635 1154.8 644.4 C1153 655 1150 660 1147.4 663 C1140 656 1135 650 1128.9 644.4 C1115 636 1100 628 1088.1 625.9 L1038.1 623.9 C1030 621 1026 617 1026.2 614.1 C1024 610 1024 606 1025.1 603.2 C1020 598 1019 595 1020.7 592.3 C1016 587 1015 582 1016.4 579.2 C1016 573 1018 568 1020.7 565.1 C1016 559 1013 551 1013.1 544.4 Z"/>
 <path fill="#A6D9D4" d="M1136 603 L1160 597 L1154 667 L1143 664 C1152 660 1157 655 1157 648 C1157 630 1148 610 1136 603 Z"/>
 <path fill="#03473F" d="M1136 604 C1148 610 1157 630 1157 648 C1157 658 1153 662 1144 663 L1142 661 C1149 650 1151 628 1134 606 Z"/>
 <!-- lines -->
 <g fill="none" stroke="#0A4A42" stroke-width="1.1" stroke-linecap="round">
  <g transform="translate(890,400) scale(0.21786)" stroke-width="5">
   <path d="M645 130 C680 170 720 205 765 225 L790 140 L820 215 C870 200 920 170 955 130"/>
   <path d="M790 140 L790 300"/>
   <path d="M495 75 L545 260 L510 295 L600 480 L695 650"/>
   <path d="M390 492 L575 495 C588 497 588 514 575 515 L390 512"/>
   <path d="M270 160 C280 300 300 420 330 535"/>
   <path d="M337 620 C330 700 325 800 325 918"/>
  </g>
  <g transform="translate(890,540) scale(0.21786)" stroke-width="5">
   <path d="M160 220 C200 215 240 230 265 250"/>
   <path d="M260 290 C290 290 310 305 330 320 C370 350 420 380 450 400 C470 415 490 435 500 455"/>
   <path d="M420 405 C350 440 290 500 275 580 C270 620 275 650 280 665"/>
   <path d="M337 0 L330 320"/>
   <path d="M690 115 L800 145 M600 175 L655 198 M615 255 L660 265"/>
  </g>
  <g transform="translate(1040,400) scale(0.37037)" stroke-width="3">
   <path d="M265 75 L245 180"/>
   <path d="M375 125 C360 135 352 150 350 165"/>
   <path d="M320 530 C340 525 360 522 380 522 M325 518 C335 512 340 510 345 510"/>
   <path d="M320 545 C340 570 352 600 352 640 C352 670 340 700 320 715"/>
  </g>
 </g>
</svg>

<!-- ===== TITLE BAR ===== -->
<svg class="a" style="left:0;top:0" width="1439" height="112" viewBox="0 0 1439 112">
 <!-- ppt logo -->
 <path d="M33 30.9 L33 18.9 A12 12 0 0 1 45 30.9 Z" fill="#FF8F6B"/>
 <path d="M33 30.9 L45 30.9 A12 12 0 0 1 33 42.9 A12 12 0 0 1 22.6 37 Z" fill="#D35230"/>
 <path d="M33 30.9 L33 18.9 A12 12 0 0 0 21 30.9 L21 36 Z" fill="#ED6C47"/>
 <rect x="22.5" y="24.5" width="15" height="15.5" rx="1.2" fill="#7A2A14" opacity="0.55"/>
 <rect x="21" y="23" width="15.5" height="16" rx="1.2" fill="#C43E1C"/>
 <path d="M26 36 V27.2 H30 A2.8 2.8 0 0 1 30 32.8 H26" fill="none" stroke="#fff" stroke-width="2"/>
 <!-- toggle -->
 <rect x="143.5" y="16.5" width="64" height="28" rx="14" fill="#fff" stroke="#3B3B3B" stroke-width="1"/>
 <circle cx="157.6" cy="30.6" r="10.4" fill="#616161"/>
 <!-- save -->
 <path d="M226.6 19.6 H249.5 V42.4 H229.3 L226.6 39.7 Z" fill="#DA8FDC" stroke="#9B239F" stroke-width="1.3"/>
 <rect x="231.8" y="19.9" width="12.6" height="8.6" fill="#FAFAFA" stroke="#9B239F" stroke-width="1.2"/>
 <rect x="233.3" y="35" width="9.8" height="7" fill="#FAFAFA" stroke="#9B239F" stroke-width="1.2"/>
 <!-- undo -->
 <path d="M270.8 19.3 V29 H280.8 M271.6 28.2 L279 21.6 A6.5 6.5 0 0 1 290.4 25.4 A6.5 6.5 0 0 1 288 31.8 L278.9 42.2" fill="none" stroke="#A1A4A6" stroke-width="1.6"/>
 <path d="M301.4 28.4 L305.4 32.2 L309.4 28.4" fill="none" stroke="#B5B8BA" stroke-width="1.1"/>
 <!-- redo -->
 <path d="M326.4 19.6 H334.6 V27.6" fill="none" stroke="#9C9C9C" stroke-width="1.6"/>
 <path d="M344.3 20.9 A11.6 11.6 0 1 1 334 20.4" fill="none" stroke="#9C9C9C" stroke-width="1.6"/>
 <!-- present -->
 <path d="M369 19.9 H391.4 M371.3 19.9 V31.8 H389.3 V19.9 M380.3 31.8 V40.4 M373.4 40.4 H387" fill="none" stroke="#333" stroke-width="1.6"/>
 <rect x="372.1" y="20.7" width="16.4" height="10.3" fill="#FAFAFA"/>
 <path d="M377.9 22.3 L384.2 25.9 L377.9 29.5 Z" fill="#2E9E48"/>
 <!-- customize -->
 <path d="M418.8 28.2 H430 M420 31.6 L424.5 35.4 L429 31.6" fill="none" stroke="#222" stroke-width="1.6"/>
 <!-- title chevron -->
 <path d="M882.3 27.9 L889.3 35 L896.3 27.9" fill="none" stroke="#242424" stroke-width="1.5"/>
 <!-- search -->
 <circle cx="1042.9" cy="27.4" r="6.9" fill="none" stroke="#2A2A2A" stroke-width="1.3"/>
 <path d="M1038 33.6 L1030.2 41.6" stroke="#2A2A2A" stroke-width="1.3"/>
 <!-- avatar -->
 <circle cx="1124.9" cy="30.8" r="17.9" fill="#038387"/>
 <!-- bulb -->
 <path d="M1191.3 37 V35 C1191 33 1186.5 31 1186.5 27 A8 8 0 0 1 1202.5 27 C1202.5 31 1198 33 1197.7 35 V37 Z" fill="none" stroke="#2A2A2A" stroke-width="1.3"/>
 <path d="M1191.3 39.2 H1197.7 M1192.3 42.2 H1196.7" stroke="#2A2A2A" stroke-width="1.3"/>
 <!-- window controls -->
 <path d="M1257 30.2 H1272.4" stroke="#242424" stroke-width="1.2"/>
 <rect x="1330.1" y="23.9" width="14.4" height="14.4" rx="2" fill="none" stroke="#242424" stroke-width="1.2"/>
 <path d="M1400.8 24 L1416.8 39 M1416.8 24 L1400.8 39" stroke="#242424" stroke-width="1.2"/>
 <!-- ribbon tab underline -->
 <rect x="298" y="104.4" width="53" height="2.4" rx="1.2" fill="#CBD0D2"/>
 <!-- record btn -->
 <rect x="1284.5" y="71.5" width="35" height="35" rx="5" fill="#fff" stroke="#ABABAB" stroke-width="1"/>
 <circle cx="1302" cy="89" r="8.3" fill="none" stroke="#242424" stroke-width="1.3"/>
 <circle cx="1302" cy="89" r="4.6" fill="#242424"/>
 <!-- comment btn -->
 <rect x="1332.5" y="71.5" width="35" height="35" rx="5" fill="#fff" stroke="#ABABAB" stroke-width="1"/>
 <path d="M1342.3 81.6 H1357.7 V93.4 H1348 L1344.5 97.5 V93.4 H1342.3 Z" fill="none" stroke="#242424" stroke-width="1.3"/>
 <!-- share btn -->
 <rect x="1380" y="71" width="47" height="36" rx="5.5" fill="#C43E1C"/>
 <path d="M1387.6 85 V97.7 H1401 V94.2" fill="none" stroke="#fff" stroke-width="1.4"/>
 <path d="M1390.6 94.5 C1390.8 88 1394 84.8 1398.8 84.8 V81.2 L1404.6 87.3 L1398.8 93.2 V89.2 C1395 89.2 1392.5 91 1390.6 94.5 Z" fill="none" stroke="#fff" stroke-width="1.4" stroke-linejoin="round"/>
 <path d="M1412.5 87.3 L1415.8 90.5 L1419.1 87.3" fill="none" stroke="#fff" stroke-width="1.5"/>
</svg>
<span class="t" style="left:68px;top:24.2px;font-size:16px;color:#242424;transform:scaleX(0.97);transform-origin:0 0">AutoSave</span>
<span class="t" style="left:176px;top:24.2px;font-size:16px;color:#616161">Off</span>
<span class="t" style="left:466.7px;top:24.2px;font-size:17.6px;color:#242424;transform:scaleX(1.018);transform-origin:0 0">Change Management Chart.pptx • Saved to this PC</span>
<span class="t" style="left:1116.5px;top:24px;font-size:14.8px;color:#FAF4E4">RX</span>

<span class="t rib" style="left:27.39px;transform:scaleX(1.054)">File</span>
<span class="t rib" style="left:94.61px;transform:scaleX(1.094)">Home</span>
<span class="t rib" style="left:174.77px;transform:scaleX(0.984)">OfficePLUS</span>
<span class="t rib" style="left:298.47px;transform:scaleX(1.022)">Insert</span>
<span class="t rib" style="left:372.42px;transform:scaleX(1.055)">Draw</span>
<span class="t rib" style="left:442.72px;transform:scaleX(1.052)">Design</span>
<span class="t rib" style="left:530.90px;transform:scaleX(1.001)">Transitions</span>
<span class="t rib" style="left:650.87px;transform:scaleX(1.057)">Animations</span>
<span class="t rib" style="left:774.98px;transform:scaleX(1.020)">Slide Show</span>
<span class="t rib" style="left:893.93px;transform:scaleX(1.034)">Record</span>
<span class="t rib" style="left:980.22px;transform:scaleX(0.988)">Review</span>
<span class="t rib" style="left:1066.70px;transform:scaleX(1.000)">View</span>
<span class="t rib" style="left:1131.09px;transform:scaleX(1.070)">Help</span>
<span class="t rib" style="left:1196.17px;transform:scaleX(1.062)">Acrobat</span>

<!-- status bar -->
<div class="a" style="left:0;top:889px;width:1439px;height:1px;background:#FBFBFB"></div>
<div class="a" style="left:0;top:890px;width:1439px;height:28px;background:#F3F3F3"></div>
<div class="a" style="left:896px;top:891px;width:60px;height:27px;background:#E0E0E0"></div>
<svg class="a" style="left:0;top:0" width="1439" height="918" viewBox="0 0 1439 918">
 <!-- v scroll arrows -->
 <path d="M1320 120.5 L1326 129.5 H1314 Z" fill="#737373" stroke="#737373" stroke-width="1.5" stroke-linejoin="round"/>
 <path d="M1320 797 L1326 788.3 H1314 Z" fill="#737373" stroke="#737373" stroke-width="1.5" stroke-linejoin="round"/>
 <path d="M1320 810 L1326 818.5 H1314 Z M1320 817 L1326 827 H1314 Z" fill="#737373" stroke="#737373" stroke-width="1.5" stroke-linejoin="round"/>
 <path d="M1320 845 L1326 836 H1314 Z M1320 853 L1326 844 H1314 Z" fill="#737373" stroke="#737373" stroke-width="1.5" stroke-linejoin="round"/>
 <!-- h scroll arrows -->
 <path d="M224.8 871.3 L233.4 865.5 V877.2 Z" fill="#737373" stroke="#737373" stroke-width="1.5" stroke-linejoin="round"/>
 <path d="M1298.6 871 L1290 865 V877 Z" fill="#737373" stroke="#737373" stroke-width="1.5" stroke-linejoin="round"/>
 <!-- right pane -->
 <circle cx="1359.3" cy="149.3" r="1.6" fill="#222"/><circle cx="1365" cy="149.3" r="1.6" fill="#222"/><circle cx="1370.7" cy="149.3" r="1.6" fill="#222"/>
 <path d="M1395.4 138.3 L1405.2 148 L1415 138.3" fill="none" stroke="#333" stroke-width="1.4"/>
 <g fill="none" stroke="#444" stroke-width="1.4">
  <rect x="1374.6" y="200.7" width="25.6" height="21" rx="3"/>
  <path d="M1403.2 204.5 V222 A3 3 0 0 1 1400 225 H1378.5"/>
  <rect x="1379.6" y="205.6" width="16.4" height="11.8" rx="1"/>
  <path d="M1379.6 209.2 H1396 M1384.2 209.2 V217.4"/>
  <rect x="1374.6" y="284.4" width="29" height="23" rx="3.5"/>
  <rect x="1379.6" y="289.9" width="18.4" height="12.4" rx="1"/>
  <path d="M1379.6 293.4 H1398 M1393.4 289.9 V302.3"/>
  <circle cx="1388.8" cy="379.6" r="12.8"/>
  <path d="M1388.8 366.8 V379.6 H1401.6"/>
  <path d="M1389 450.1 V477.5" stroke="#5A5A5A" stroke-width="1.5"/>
  <path d="M1386.5 458.3 L1384.4 456 L1383.3 454 H1380.4 L1375.9 458.3 L1380.8 463 V475.2 H1386.5 M1391.5 458.3 L1393.6 456 L1394.7 454 H1397.6 L1402.1 458.3 L1397.2 463 V475.2 H1391.5"/>
 </g>
 <!-- gear -->
 <g transform="translate(1389,830.7)" fill="none" stroke="#333" stroke-width="1.4" stroke-linejoin="round">
  <path d="M-2.6 -11.3 L2.6 -11.3 L3.4 -7.9 L6 -6.4 L9.4 -7.5 L12 -3 L9.4 -0.6 L9.4 2.4 L12 4.7 L9.4 9.2 L6 8.1 L3.4 9.6 L2.6 11.3 L-2.6 11.3 L-3.4 9.6 L-6 8.1 L-9.4 9.2 L-12 4.7 L-9.4 2.4 L-9.4 -0.6 L-12 -3 L-9.4 -7.5 L-6 -6.4 L-3.4 -7.9 Z" transform="scale(0.95)"/>
  <circle cx="0" cy="0.5" r="3.6"/>
 </g>
 <!-- accessibility icon -->
 <g fill="none" stroke="#2A2A2A" stroke-width="1.3" stroke-linecap="round" stroke-linejoin="round">
  <circle cx="425" cy="899.9" r="2.7"/>
  <path d="M416.8 901.6 C418.5 904 421.5 905.6 425 905.6 C428.5 905.6 431.8 904 434.2 900.8"/>
  <path d="M423.3 905.8 C423.3 909 422.5 912 419.8 916.4 M426.7 905.8 C426.9 908 427.3 909.5 428.2 910.6"/>
  <path d="M428.8 909.6 L436.8 916.6 M436.8 909.6 L428.8 916.6"/>
 </g>
 <!-- notes icon -->
 <g fill="none" stroke="#2A2A2A" stroke-width="1.3">
  <path d="M808.5 901 L813.2 896.4 L817.9 901"/>
  <path d="M801 906.4 H825 M801 912.3 H825 M801 917.4 H825"/>
 </g>
 <!-- view icons -->
 <g fill="none" stroke="#2A2A2A" stroke-width="1.4">
  <rect x="916.5" y="899" width="19.2" height="16.2" rx="0.8"/>
  <path d="M920.6 899 V915.2 M920.6 911.4 H935.7"/>
  <rect x="925.4" y="903" width="6.4" height="3.2"/>
  <rect x="976.2" y="899" width="7.2" height="6.6" rx="0.8"/><rect x="988.8" y="899" width="7.2" height="6.6" rx="0.8"/>
  <rect x="976.2" y="908.6" width="7.2" height="6.6" rx="0.8"/><rect x="988.8" y="908.6" width="7.2" height="6.6" rx="0.8"/>
  <path d="M1036.3 897.4 H1043.5 L1045.2 899 L1046.9 897.4 H1054.1 V914 H1046.9 L1045.2 915.6 L1043.5 914 H1036.3 Z M1045.2 899 V914"/>
  <path d="M1038.5 901.5 H1042.5 M1038.5 904.5 H1042.5 M1038.5 907.5 H1042.5 M1038.5 910.5 H1042.5 M1048 901.5 H1052 M1048 904.5 H1052 M1048 907.5 H1052 M1048 910.5 H1052"/>
  <path d="M1095.7 897.3 H1114.7 M1097.4 897.3 V908 H1113.4 V897.3 M1105.4 908 V915.2 M1100.2 915.2 H1110.4 M1102.6 901.8 H1108.2"/>
 </g>
 <!-- zoom slider -->
 <path d="M1144.3 906.8 H1155.3" stroke="#444" stroke-width="1.2"/>
 <path d="M1164 907 H1312" stroke="#6E6E6E" stroke-width="2"/>
 <path d="M1238.2 903 V911" stroke="#6E6E6E" stroke-width="1.6"/>
 <rect x="1185.2" y="898.2" width="7.8" height="16.3" rx="1" fill="#6E6E6E"/>
 <path d="M1320 906.9 H1331.2 M1325.6 901.3 V912.5" stroke="#333" stroke-width="1.2"/>
 <!-- fit -->
 <g fill="none" stroke="#2A2A2A" stroke-width="1.4">
  <rect x="1405.9" y="901.5" width="9.2" height="9.2"/>
  <path d="M1402.5 902.8 L1399.7 906.1 L1402.5 909.4 M1418.2 902.8 L1421 906.1 L1418.2 909.4 M1407.3 898.2 L1410.5 895.5 L1413.7 898.2 M1407.3 914 L1410.5 916.7 L1413.7 914"/>
 </g>
</svg>

<!-- CJK glyph approximations -->
<svg class="a" style="left:0;top:0" width="1439" height="918" viewBox="0 0 1439 918">
 <g fill="none" stroke="#3A3A3A" stroke-linecap="butt">
  <g transform="translate(1370,230) scale(0.027797)" stroke-width="40">
   <path d="M235 150V600 M150 270H310 M230 330L155 450 M250 340L310 390"/>
   <path d="M330 190H670 M420 150V230 M555 150V230 M380 290H620V410H380Z M380 350H620 M330 485H670 M495 410V485 M470 500L320 600 M520 510L660 600"/>
   <path d="M790 150V600 M700 270H860 M780 330L705 450 M800 340L850 390"/>
   <path d="M920 190L1210 165 M920 190V400L860 590 M940 295H1180L1130 420L920 600 M1000 380L1210 600"/>
  </g>
  <g transform="translate(1370,314) scale(0.027797)" stroke-width="40">
   <path d="M270 150L330 210 M550 150L490 210 M210 230H610V450H210Z M210 300H610 M210 400H610 M410 230V600 M150 520H670"/>
   <path d="M690 160H1210 M940 180L920 250 M770 490V265H1130V490 M950 330V460 M940 460L700 600 M960 470L1200 600"/>
  </g>
  <g transform="translate(1370,398) scale(0.027797)" stroke-width="40">
   <path d="M180 195H650 M220 265H600 M150 340H670 M410 150V340 M300 370L480 420L260 470 M200 485L600 465 M180 590L300 530 M420 500V590H340 M520 520L640 600"/>
   <path d="M805 150V600 M700 270H1210 M780 330L700 470 M830 340L910 410 M1120 150V590L990 600 M1090 320L880 520"/>
  </g>
  <g transform="translate(1356,482) scale(0.045872)" stroke-width="24">
   <path d="M230 90L70 210 M230 90L380 210 M110 270H350 M80 355H380 M230 210V355 M140 200H320"/>
   <path d="M550 90L560 125 M400 140H710 M480 150C520 260 600 330 720 360 M640 150C600 260 520 330 400 360"/>
   <path d="M810 95L840 125 M950 95L920 125 M750 140H1020 M760 190H1010 M740 240H1030 M885 140V290 M730 290H1040 M880 290C840 330 790 350 740 360 M900 300C940 340 990 355 1030 360"/>
   <path d="M1140 90L1060 240 M1105 170V360 M1350 130L1140 290 M1225 90V330C1225 350 1240 355 1260 355H1360L1370 290"/>
  </g>
 </g>
</svg>
<span class="t st" style="left:14px">Slide 1 of 7</span>
<span class="t st" style="left:137.5px">Chinese (Simplified, Mainland China)</span>
<span class="t st" style="left:442.8px;font-weight:700;transform:scaleX(1.017);transform-origin:0 0">Accessibility: Investigate</span>
<span class="t st" style="left:827.3px;transform:scaleX(1.04);transform-origin:0 0">Notes</span>
<span class="t st" style="left:1350px">37%</span>

</body></html>
